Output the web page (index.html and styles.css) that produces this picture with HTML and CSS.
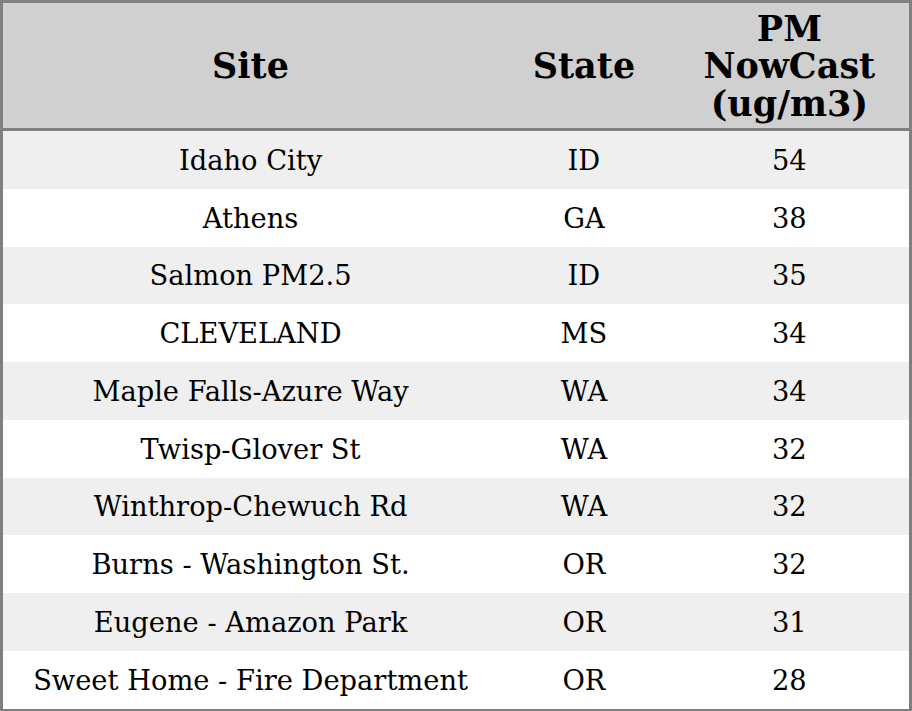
FILE: index.html
```html
<!DOCTYPE html>
<html>
<head>
<meta charset="utf-8">
<link rel="stylesheet" href="styles.css">
</head>
<body>
<table class="aq">
  <colgroup>
    <col class="c-site">
    <col class="c-state">
    <col class="c-pm">
  </colgroup>
  <thead>
    <tr><th>Site</th><th>State</th><th>PM<br>NowCast<br>(ug/m3)</th></tr>
  </thead>
  <tbody>
    <tr><td>Idaho City</td><td>ID</td><td>54</td></tr>
    <tr><td>Athens</td><td>GA</td><td>38</td></tr>
    <tr><td>Salmon PM2.5</td><td>ID</td><td>35</td></tr>
    <tr><td>CLEVELAND</td><td>MS</td><td>34</td></tr>
    <tr><td>Maple Falls-Azure Way</td><td>WA</td><td>34</td></tr>
    <tr><td>Twisp-Glover St</td><td>WA</td><td>32</td></tr>
    <tr><td>Winthrop-Chewuch Rd</td><td>WA</td><td>32</td></tr>
    <tr><td>Burns - Washington St.</td><td>OR</td><td>32</td></tr>
    <tr><td>Eugene - Amazon Park</td><td>OR</td><td>31</td></tr>
    <tr><td>Sweet Home - Fire Department</td><td>OR</td><td>28</td></tr>
  </tbody>
</table>
</body>
</html>
```
FILE: styles.css
```css
html, body {
  margin: 0;
  padding: 0;
  background: #ffffff;
}
.aq {
  width: 912px;
  border-collapse: collapse;
  table-layout: fixed;
  border: 3px solid #808080;
  font-family: "DejaVu Serif", serif;
  color: #000;
}
.c-site { width: 495px; }
.c-state { width: 171px; }
.c-pm { width: 240px; }
.aq thead tr {
  background: #d0d0d0;
  border-bottom: 3px solid #808080;
}
.aq th {
  font-size: 35px;
  font-weight: bold;
  line-height: 37.5px;
  height: 124px;
  padding: 1px 0 0;
  text-align: center;
  vertical-align: middle;
}
.aq td {
  font-size: 27.3px;
  line-height: 30px;
  height: 55.75px;
  padding: 2px 0 0;
  text-align: center;
  vertical-align: middle;
}
.aq tbody tr:nth-child(odd) { background: #efefef; }
.aq tbody tr:nth-child(even) { background: #ffffff; }
```
